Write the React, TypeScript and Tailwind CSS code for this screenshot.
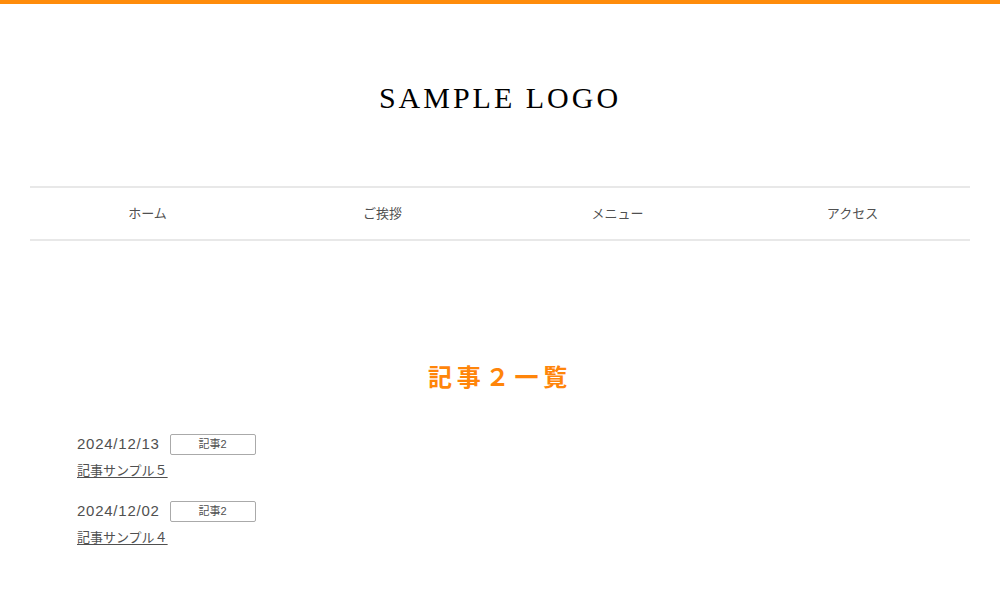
const navItems = ["ホーム", "ご挨拶", "メニュー", "アクセス"];

const posts = [
  { date: "2024/12/13", category: "記事2", title: "記事サンプル５" },
  { date: "2024/12/02", category: "記事2", title: "記事サンプル４" },
];

const Header = () => {
  return (
    <header className="px-[30px] pt-[70px]">
      <h1 className="text-center">
        <a
          href="#"
          className="font-['Liberation_Serif',serif] text-[30px] leading-12 tracking-widest text-black"
        >
          SAMPLE LOGO
        </a>
      </h1>
      <nav className="mt-16 border-y-2 border-[#e8e8e8]">
        <ul className="grid grid-cols-4">
          {navItems.map((item) => (
            <li key={item}>
              <a
                href="#"
                className="block py-4 text-center text-[13px] leading-[19px]"
              >
                {item}
              </a>
            </li>
          ))}
        </ul>
      </nav>
    </header>
  );
};

const PostList = () => {
  return (
    <ul className="mt-[34px] flex flex-col gap-[13px]">
      {posts.map(({ date, category, title }) => (
        <li key={date}>
          <div className="flex items-center gap-[10px]">
            <time className="text-[15px] leading-7 tracking-wider">{date}</time>
            <span className="w-[86px] rounded-xs border border-[#aaa] text-center text-[11px] leading-[19px]">
              {category}
            </span>
          </div>
          <a
            href="#"
            className="block w-fit text-[13px] leading-[26px] underline underline-offset-2"
          >
            {title}
          </a>
        </li>
      ))}
    </ul>
  );
};

export default function App() {
  return (
    <div className="min-h-screen border-t-4 border-[#ff8c0a] bg-white font-['Liberation_Sans','Noto_Sans_CJK_JP',sans-serif] text-[#505050]">
      <Header />
      <main className="px-[77px] pt-[119px] pb-12">
        <h2 className="text-center text-2xl leading-9 font-bold tracking-[0.2em] text-[#ff850a]">
          記事２一覧
        </h2>
        <PostList />
      </main>
    </div>
  );
}
